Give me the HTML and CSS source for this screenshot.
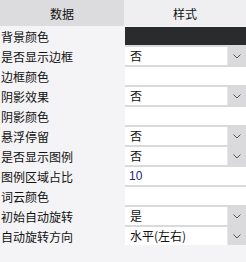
FILE: index.html
```html
<!DOCTYPE html>
<html>
<head>
  <title>词云设置</title>
  <link rel="stylesheet" href="styles.css">
</head>
<body>
  <div class="panel">
    <div class="tabs">
      <div class="tab tab-active">数据</div>
      <div class="tab">样式</div>
    </div>

    <div class="props">
      <div class="label">背景颜色</div>
      <div class="cell"><div class="swatch"></div></div>

      <div class="label">是否显示边框</div>
      <div class="cell"><div class="select"><span class="value">否</span><span class="arrow"><svg width="8" height="5" viewBox="0 0 8 5"><path d="M0.5 0.5 L4 4 L7.5 0.5" fill="none" stroke="#555" stroke-width="1"/></svg></span></div></div>

      <div class="label">边框颜色</div>
      <div class="cell"><div class="input"></div></div>

      <div class="label">阴影效果</div>
      <div class="cell"><div class="select"><span class="value">否</span><span class="arrow"><svg width="8" height="5" viewBox="0 0 8 5"><path d="M0.5 0.5 L4 4 L7.5 0.5" fill="none" stroke="#555" stroke-width="1"/></svg></span></div></div>

      <div class="label">阴影颜色</div>
      <div class="cell"><div class="input"></div></div>

      <div class="label">悬浮停留</div>
      <div class="cell"><div class="select"><span class="value">否</span><span class="arrow"><svg width="8" height="5" viewBox="0 0 8 5"><path d="M0.5 0.5 L4 4 L7.5 0.5" fill="none" stroke="#555" stroke-width="1"/></svg></span></div></div>

      <div class="label">是否显示图例</div>
      <div class="cell"><div class="select"><span class="value">否</span><span class="arrow"><svg width="8" height="5" viewBox="0 0 8 5"><path d="M0.5 0.5 L4 4 L7.5 0.5" fill="none" stroke="#555" stroke-width="1"/></svg></span></div></div>

      <div class="label">图例区域占比</div>
      <div class="cell"><div class="input number">10</div></div>

      <div class="label">词云颜色</div>
      <div class="cell"><div class="input"></div></div>

      <div class="label">初始自动旋转</div>
      <div class="cell"><div class="select"><span class="value">是</span><span class="arrow"><svg width="8" height="5" viewBox="0 0 8 5"><path d="M0.5 0.5 L4 4 L7.5 0.5" fill="none" stroke="#555" stroke-width="1"/></svg></span></div></div>

      <div class="label">自动旋转方向</div>
      <div class="cell last"><div class="select"><span class="value">水平(左右)</span><span class="arrow"><svg width="8" height="5" viewBox="0 0 8 5"><path d="M0.5 0.5 L4 4 L7.5 0.5" fill="none" stroke="#555" stroke-width="1"/></svg></span></div></div>
    </div>
  </div>
</body>
</html>
```

FILE: styles.css
```css
body {
  margin: 0;
  padding: 0;
  background-color: #f4f4f6;
  font-family: "Noto Sans CJK SC", "DejaVu Sans", sans-serif;
  font-size: 12px;
  color: #111111;
}

.panel {
  width: 246px;
  height: 262px;
  background-color: #f4f4f6;
}

.tabs {
  display: grid;
  grid-template-columns: 124px 1fr;
  height: 26px;
}

.tab {
  display: flex;
  align-items: center;
  justify-content: center;
  background-color: #efeff1;
  color: #111111;
  font-size: 12px;
}

.tab-active {
  background-color: #dcdcdf;
}

.props {
  display: grid;
  grid-template-columns: 125px 1fr;
  grid-auto-rows: 20px;
  padding-top: 1px;
}

.label {
  display: flex;
  align-items: center;
  height: 18px;
  padding-left: 1px;
  white-space: nowrap;
}

.cell {
  background-color: #dadadd;
  padding-bottom: 2px;
}

.cell.last {
  padding-bottom: 0;
  height: 18px;
}

.swatch {
  height: 18px;
  background-color: #2a2b2d;
}

.input {
  height: 18px;
  background-color: #ffffff;
  padding-left: 4px;
  line-height: 18px;
}

.input.number {
  color: #1c2470;
  font-family: "Liberation Sans", sans-serif;
}

.select {
  display: flex;
  height: 18px;
}

.select .value {
  width: 97px;
  padding-left: 5px;
  background-color: #ffffff;
  line-height: 18px;
  white-space: nowrap;
}

.select .arrow {
  flex: 1;
  display: flex;
  align-items: center;
  justify-content: center;
  border-left: 1px solid #e6e6e8;
  padding-top: 1px;
}
```
